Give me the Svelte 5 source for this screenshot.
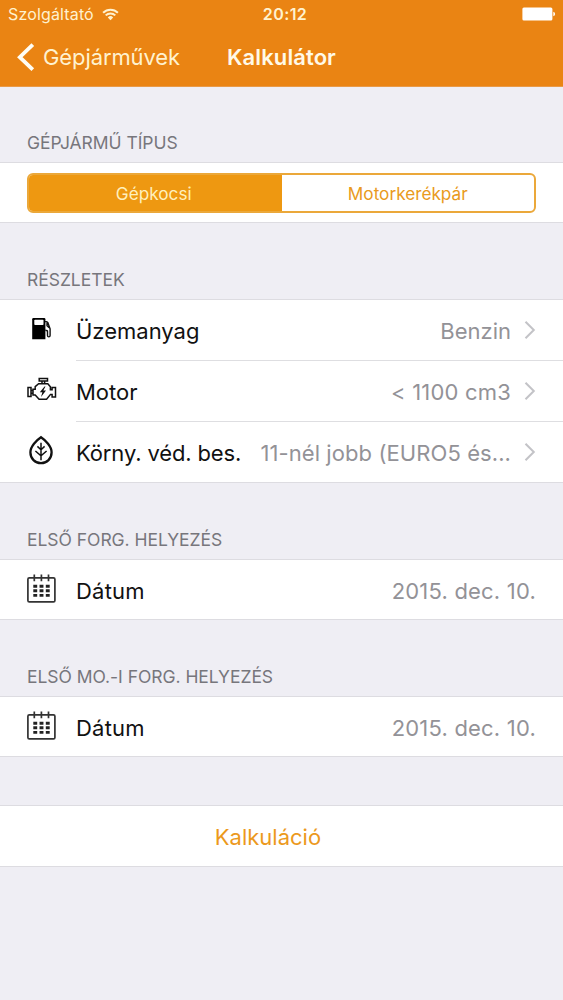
<script>
  const details = [
    { icon: 'fuel', label: 'Üzemanyag', value: 'Benzin' },
    { icon: 'engine', label: 'Motor', value: '< 1100 cm3' },
    { icon: 'leaf', label: 'Körny. véd. bes.', value: '11-nél jobb (EURO5 és...' }
  ];
  const dates = ['Első forg. helyezés', 'Első Mo.-i forg. helyezés'];
  let selected = $state(0);
</script>

{#snippet icon(name)}
  <svg class="icon {name}" width="30" height="34" viewBox="0 0 30 34" fill="none" stroke="#111" stroke-width="1.5">
    {#if name === 'fuel'}
      <path d="M6.4 6h10.8q1.2 0 1.2 1.2V27.3H5.2V7.2Q5.2 6 6.4 6Z" fill="#000" stroke="none" />
      <rect x="7.3" y="7.8" width="9.2" height="5.2" rx=".8" fill="#fff" stroke="none" />
      <path d="M18 9.6h1.5q1 0 1.3 1l2.3 6.3v6.7q0 1.3-1.3 1.3t-1.3-1.3v-4.2q0-1.2-2.2-1.2M20 10.4v3.4l2.2 2" stroke-width="1.4" />
    {:else if name === 'engine'}
      <path d="M12.2 4.5h8.3v2.4h-8.3ZM15 6.9v2.7M17.6 6.9v2.7M6 15.2h2.2v-2.6l3.4-2.9h9.2l2.6 3v3h1.7v-2.3h3.4v9.5h-3.4v-2.5h-1.6l-3.9 4.8h-7.5L8.2 20.9H6ZM6 16.6H4M4 19.3h2M1 13.6h3v9H1Z" stroke-width="1.5" />
      <path d="m17.5 12.5-4.7 5.8h2.6l-1.4 4.6 5-6.3h-2.7l2.2-4.1Z" fill="#111" stroke="none" />
    {:else if name === 'leaf'}
      <path d="M14 4.2C18.6 7.2 24.6 13.7 24.6 19.2c0 6.6-4.7 11-10.6 11S3.4 25.8 3.4 19.2C3.4 13.7 9.4 7.2 14 4.2Z" stroke-width="2.3" />
      <path d="M14 9.7v17.5M10.4 13.4l3.6 3.3 3.6-3.3M8.4 18l5.6 4.8 5.6-4.8" stroke-width="1.5" />
    {:else}
      <rect x=".9" y="6.9" width="27" height="24" rx="1.4" stroke="#333" stroke-width="1.7" />
      <path d="M7.3 3.6v6.7M14.4 3.6v6.7M21.5 3.6v6.7" stroke="#333" stroke-width="1.7" />
      <path d="M6.3 15.2h16.4M6.3 19.8h16.4M6.3 24.4h16.4" stroke="#222" stroke-width="2.9" stroke-dasharray="3.9 2.35" />
    {/if}
  </svg>
{/snippet}

<div class="screen">
  <header>
    <div class="status">
      <div class="carrier">
        <span>Szolgáltató</span>
        <svg width="17" height="13" viewBox="0 0 17 13" fill="none" stroke="#fff2cf" stroke-width="2">
          <path d="M1.1 4.7a10.5 10.5 0 0 1 14.8 0M3.7 7.4a6.8 6.8 0 0 1 9.6 0" />
          <path d="M5.8 9.4a3.8 3.8 0 0 1 5.4 0L8.5 12.2Z" fill="#fff2cf" stroke="none" />
        </svg>
      </div>
      <span class="time">20:12</span>
      <svg class="battery" width="34" height="14" viewBox="0 0 34 14" fill="#fff">
        <rect x=".4" y=".4" width="30" height="13" rx="1.5" />
        <path d="M31.3 4.8q1.8.5 1.8 2.2t-1.8 2.2Z" />
      </svg>
    </div>
    <nav>
      <button class="back">
        <svg width="19" height="30" viewBox="0 0 19 30" fill="none" stroke="#fffdf4" stroke-width="3.8"><path d="M16.8 2.6 3.8 15.2 16.8 27.7" /></svg>
        <span>Gépjárművek</span>
      </button>
      <h1>Kalkulátor</h1>
    </nav>
  </header>

  <h2 class="first">Gépjármű típus</h2>
  <section class="types">
    <div class="segments">
      {#each ['Gépkocsi', 'Motorkerékpár'] as type, i}
        <button class:active={selected === i} onclick={() => (selected = i)}>{type}</button>
      {/each}
    </div>
  </section>

  <h2>Részletek</h2>
  <section>
    {#each details as row}
      <div class="row">
        {@render icon(row.icon)}
        <div class="content">
          <span class="label {row.icon}">{row.label}</span>
          <span class="value {row.icon}">{row.value}</span>
          <svg class="chevron" width="12" height="20" viewBox="0 0 12 20" fill="none" stroke="#c3c3c7" stroke-width="2"><path d="m1.5 1.7 8.3 8.3-8.3 8.3" /></svg>
        </div>
      </div>
    {/each}
  </section>

  {#each dates as title}
    <h2>{title}</h2>
    <section>
      <div class="row date">
        {@render icon('calendar')}
        <div class="content">
          <span class="label day">Dátum</span>
          <span class="value day">2015. dec. 10.</span>
        </div>
      </div>
    </section>
  {/each}

  <section class="action"><button>Kalkuláció</button></section>
</div>

<style>
  :global(body) { margin: 0; background: #efeef4; }
  * { box-sizing: border-box; }
  .screen { min-height: 1000px; background: #efeef4; font-family: Inter, "Liberation Sans", sans-serif; font-size: 22px; color: #111; }
  button { font: inherit; border: 0; padding: 0; background: none; }
  header { height: 87px; background: #ea8413; border-bottom: 1px solid #e99a48; color: #fff2cf; }
  .status { height: 28px; display: grid; grid-template-columns: 1fr auto 1fr; align-items: center; padding: 0 7px 0 8px; font-size: 16px; }
  .carrier { display: flex; align-items: center; gap: 8px; letter-spacing: .15px; }
  .time { font-weight: 600; font-size: 16px; letter-spacing: .4px; margin-left: 6px; }
  .battery { justify-self: end; }
  nav { height: 58px; display: grid; grid-template-columns: 1fr auto 1fr; align-items: center; padding: 0 16px; }
  .back { display: flex; align-items: center; gap: 8px; color: #fff2cf; justify-self: start; letter-spacing: -.1px; }
  h1 { margin: 0; font-size: 22px; font-weight: 600; color: #fff9e8; letter-spacing: .1px; }
  h2 { margin: 0; height: 76px; padding: 46px 27px 0; font-size: 17.5px; line-height: 22px; font-weight: 400; text-transform: uppercase; color: #77767c; letter-spacing: -.04px; }
  h2.first { height: 75px; padding-top: 45px; }
  section { background: #fff; border-top: 1px solid #dddce1; border-bottom: 1px solid #dddce1; }
  .types { height: 61px; padding: 10px 27px; }
  .segments { height: 40px; display: grid; grid-template-columns: 1fr 1fr; border: 2px solid #eba83a; border-radius: 6px; overflow: hidden; }
  .segments button { font-size: 17.2px; color: #e99a20; }
  .segments .active { background: #ee9811; color: #fff0bd; padding-right: 3px; }
  .row { height: 61px; display: flex; padding-left: 27px; gap: 19px; align-items: center; }
  .row:first-child { height: 60px; }
  .icon { flex: none; }
  .icon.fuel { margin-bottom: 2px; }
  .icon.leaf { margin-bottom: 3px; }
  .icon.calendar { margin-bottom: 4px; }
  .content { flex: 1; height: 100%; display: flex; align-items: center; justify-content: space-between; padding: 1px 27px 0 0; }
  .row + .row .content { padding-top: 2px; border-top: 1px solid #dedee1; }
  .label.leaf { letter-spacing: -.13px; }
  .label.day { letter-spacing: .2px; }
  .value { margin-left: auto; color: #939297; white-space: nowrap; }
  .value.engine { letter-spacing: .2px; }
  .value.leaf { letter-spacing: .08px; }
  .value.day { letter-spacing: .2px; }
  .chevron { margin: 0 0 2px 13px; flex: none; }
  .row.date { height: 59px; }
  .date .content { padding-top: 2px; }
  .action { height: 62px; margin-top: 48px; padding: 2px 27px 0 0; display: grid; place-items: center; }
  .action button { color: #ec991c; }
</style>
